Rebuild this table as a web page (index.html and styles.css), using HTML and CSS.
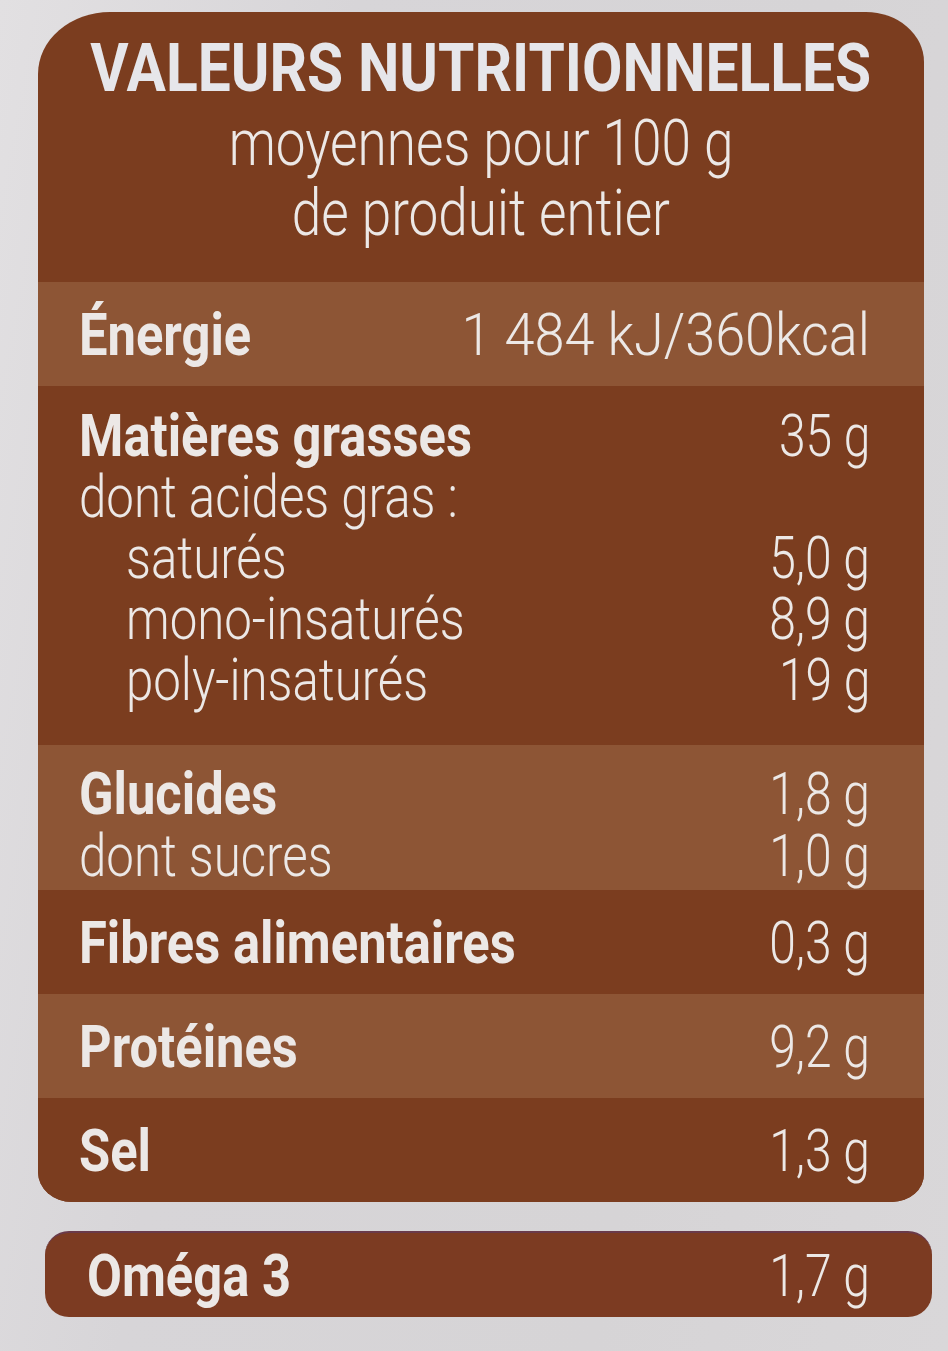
FILE: index.html
```html
<!DOCTYPE html>
<html lang="fr">
<head>
<meta charset="utf-8">
<title>Valeurs nutritionnelles</title>
<link rel="stylesheet" href="styles.css">
</head>
<body>
<main class="label">
  <section class="panel">
    <header class="head">
      <h1 class="title"><span>VALEURS NUTRITIONNELLES</span></h1>
      <p class="sub"><span>moyennes pour 100 g</span></p>
      <p class="sub"><span>de produit entier</span></p>
    </header>

    <div class="band light single">
      <div class="line"><span class="lbl">Énergie</span><span class="val wide">1 484 kJ/360kcal</span></div>
    </div>

    <div class="band dark multi fat">
      <div class="line"><span class="lbl">Matières grasses</span><span class="val">35 g</span></div>
      <div class="line"><span class="thin">dont acides gras :</span></div>
      <div class="line indent"><span class="thin">saturés</span><span class="val">5,0 g</span></div>
      <div class="line indent"><span class="thin">mono-insaturés</span><span class="val">8,9 g</span></div>
      <div class="line indent"><span class="thin">poly-insaturés</span><span class="val">19 g</span></div>
    </div>

    <div class="band light multi carbs">
      <div class="line"><span class="lbl">Glucides</span><span class="val">1,8 g</span></div>
      <div class="line"><span class="thin">dont sucres</span><span class="val">1,0 g</span></div>
    </div>

    <div class="band dark single fibre">
      <div class="line"><span class="lbl">Fibres alimentaires</span><span class="val">0,3 g</span></div>
    </div>

    <div class="band light single prot">
      <div class="line"><span class="lbl">Protéines</span><span class="val">9,2 g</span></div>
    </div>

    <div class="band dark single salt">
      <div class="line"><span class="lbl">Sel</span><span class="val">1,3 g</span></div>
    </div>
  </section>

  <section class="omega">
    <div class="line"><span class="lbl">Oméga 3</span><span class="val">1,7 g</span></div>
  </section>
</main>
</body>
</html>
```
FILE: styles.css
```css
html, body {
  margin: 0;
  padding: 0;
}

body {
  width: 948px;
  height: 1351px;
  overflow: hidden;
  background: linear-gradient(100deg, #e2e0e2 0%, #d7d5d8 30%, #d6d4d6 70%, #d9d7d9 100%);
  font-family: Roboto, "Liberation Sans", sans-serif;
  color: #ece8e6;
}

.label {
  display: flex;
  flex-direction: column;
  padding-top: 12px;
}

.panel {
  margin-left: 38px;
  width: 886px;
  border-radius: 72px 58px 32px 34px / 62px 50px 28px 30px;
  overflow: hidden;
  background: #7b3d1f;
  display: flex;
  flex-direction: column;
}

.head {
  height: 270px;
  padding-top: 17px;
  box-sizing: border-box;
  text-align: center;
}

.title {
  margin: 0;
  font-size: 66px;
  line-height: 80px;
  font-weight: 700;
}

.title span {
  display: inline-block;
  transform: scaleX(0.89);
  transform-origin: center;
  color: #e6e6ea;
}

.sub {
  margin: 0;
  font-size: 64px;
  line-height: 70px;
  font-weight: 300;
}

.sub span {
  display: inline-block;
  transform: scaleX(0.83);
  transform-origin: center;
}

.band {
  display: flex;
  flex-direction: column;
  box-sizing: border-box;
  padding: 0 54px 0 41px;
}

.light {
  background: #8d5535;
}

.dark {
  background: #7b3d1f;
}

.single .line {
  flex: 1;
}

.band.single {
  height: 104px;
}

.fibre,
.prot {
  height: 105px;
}

.salt {
  height: 103px;
}

.fat {
  height: 359px;
  padding-top: 19px;
}

.carbs {
  height: 145px;
  padding-top: 18px;
}

.line {
  display: flex;
  justify-content: space-between;
  align-items: center;
  font-size: 60px;
  line-height: 61px;
  white-space: nowrap;
}

.carbs .line {
  line-height: 62px;
}

.indent {
  padding-left: 47px;
}

.lbl,
.thin,
.val {
  display: inline-block;
}

.lbl {
  font-weight: 700;
  transform: scaleX(0.845);
  transform-origin: left center;
}

.thin {
  font-weight: 300;
  transform: scaleX(0.82);
  transform-origin: left center;
}

.val {
  font-weight: 300;
  transform: scaleX(0.8);
  transform-origin: right center;
}

.val.wide {
  transform: scaleX(0.9);
}

.omega {
  margin-top: 29px;
  margin-left: 45px;
  width: 887px;
  height: 86px;
  box-sizing: border-box;
  padding: 0 62px 0 42px;
  border-radius: 24px;
  background: #7c3b22;
  border-top: 2px solid #6a3a4a;
  display: flex;
}

.omega .line {
  flex: 1;
}
```
